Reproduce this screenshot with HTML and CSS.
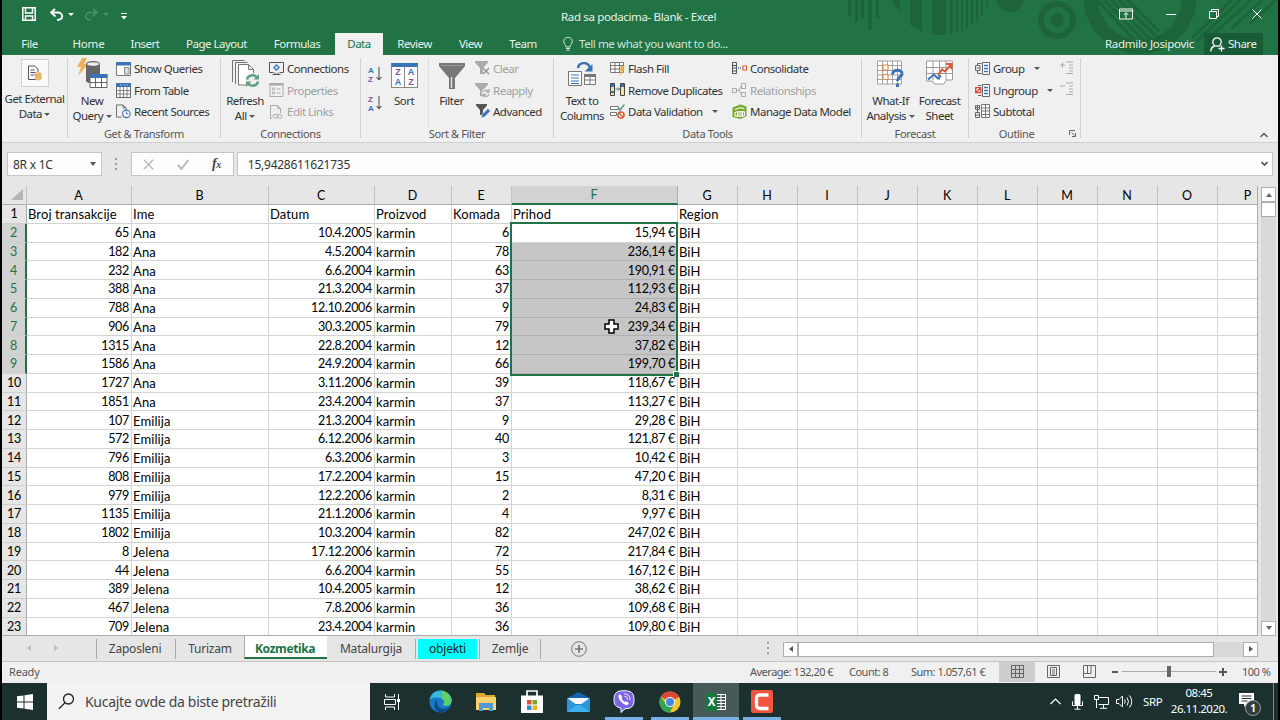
FILE: index.html
```html
<!DOCTYPE html>
<html lang="sr-Latn">
<head>
  <meta charset="UTF-8">
  <meta name="viewport" content="width=device-width, initial-scale=1.0">
  <title>Rad sa podacima- Blank - Excel</title>
  <link rel="stylesheet" href="styles.css">
</head>
<body>
  <svg class="defs" width="0" height="0">
    <defs>
      <symbol id="i-window" viewBox="0 0 15 14"><path d="M.5.5h14v13H.5z" fill="#fff" stroke="#777"/><path d="M0 0h15v3.5H0z" fill="#3b74b5"/><path d="M8.500 5.500h4.500v6.500h-4.500z" fill="#ddd" stroke="#888"/></symbol>
      <symbol id="i-table" viewBox="0 0 15 15"><path d="M.5.5h14v14H.5z" fill="#fff" stroke="#666"/><path d="M0 0h15v4H0z" fill="#3b74b5"/><path d="M4 4v11M7.500 4v11M11 4v11M0 7.500h15M0 11h15" stroke="#777" stroke-width=".9"/><path d="M4.500 2h1M7.500 2h1M10.500 2h1" stroke="#fff"/></symbol>
      <symbol id="i-recent" viewBox="0 0 16 15"><path d="M6 13.500H.5V.5h7l3 3V6M7.500.5v3h3" fill="none" stroke="#666"/><circle cx="11" cy="10" r="4" fill="#fff" stroke="#3b74b5" stroke-width="1.200"/><path d="M11 7.500V10h2.200" fill="none" stroke="#3b74b5"/></symbol>
      <symbol id="i-conn" viewBox="0 0 15 13"><path d="M4.500 10.500h-4V.5h14v10h-4M3.500 12.500h8M6 10.500v2M9 10.500v2" fill="none" stroke="#555"/><path d="M7.500 2L11 5.500 7.500 9 4 5.500z" fill="#3b74b5"/><circle cx="7.500" cy="5.500" r="1.200" fill="#fff"/></symbol>
      <symbol id="i-props" viewBox="0 0 14 14"><path d="M.5.5h13v13H.5z" fill="none" stroke="#aaa"/><path d="M0 0h14v2.500H0z" fill="#aaa"/><path d="M3 5h2v2H3zM3 9h2v2H3z" fill="none" stroke="#aaa" stroke-width=".8"/><path d="M7 6h4M7 10h4" stroke="#aaa"/></symbol>
      <symbol id="i-links" viewBox="0 0 13 14"><path d="M2 13.500H.5V.5h7l3 3V8M7.500.5v3h3" fill="none" stroke="#aaa"/><rect x="3" y="9.500" width="5" height="3.500" rx="1.700" fill="none" stroke="#aaa"/><rect x="7" y="9.500" width="5" height="3.500" rx="1.700" fill="none" stroke="#aaa"/></symbol>
      <symbol id="i-flash" viewBox="0 0 15 14"><path d="M.5.5h13v10H.5zM5 .5v10M9.500.5v10M.5 3.500h13M.5 7h13" fill="#fff" stroke="#777"/><path d="M11 4h4l-2 3.500h2L9.500 14l1.500-5H9z" fill="#e8b35a"/></symbol>
      <symbol id="i-dup" viewBox="0 0 15 14"><path d="M.5.5h4v12h-4zM10.500.5h4v12h-4z" fill="#f3e1a0" stroke="#444"/><path d="M1 1h3v3H1zM1 8h3v2H1zM11 1h3v3h-3z" fill="#3b74b5"/><path d="M5.500 6h4M8 4.500L9.500 6 8 7.500" fill="none" stroke="#3b74b5"/></symbol>
      <symbol id="i-valid" viewBox="0 0 15 15"><path d="M.5 2.500h8v3h-8zM.5 8.500h6v3h-6z" fill="#fff" stroke="#777"/><path d="M8 3.500l2 2.500L14.500.5" fill="none" stroke="#4f9c7e" stroke-width="1.500"/><circle cx="11" cy="11" r="3" fill="#fff" stroke="#dc5936" stroke-width="1.500"/><path d="M9 9l4 4" stroke="#dc5936" stroke-width="1.300"/></symbol>
      <symbol id="i-cons" viewBox="0 0 15 13"><path d="M.5.5h4v11h-4zM.5 3.500h4M.5 6h4M.5 9h4" fill="none" stroke="#555"/><path d="M6 6h3" stroke="#3b74b5" stroke-width="1.500" stroke-dasharray="1 1"/><path d="M11 4h3.500v4H11z" fill="#fff" stroke="#dc5936" stroke-width="1.200"/></symbol>
      <symbol id="i-rel" viewBox="0 0 15 15"><path d="M.5 5.500h4v4h-4zM9.500.5h4v5h-4zM9.500 9.500h4v4h-4zM4.500 7.500h2.500M7 7.500L9.500 3M7 7.500l2.500 4" fill="none" stroke="#aaa"/></symbol>
      <symbol id="i-model" viewBox="0 0 14 15"><path d="M0 3.500L8 .5l6 2v9.500l-6 3-8-2z" fill="#76a82d"/><path d="M2.500 5.500L8 3.500l4 1.500M2.500 8.500l2.500-.7v4.500l-2.500-.6zM6.500 7.500h2v5h-2zM10 7.500l2 .5v3.500l-2 .8z" fill="none" stroke="#fff" stroke-width="1.100"/></symbol>
      <symbol id="i-group" viewBox="0 0 15 13"><path d="M2.500 3V1.500h4M2.500 9v2.500h4M.5 3.500h4.500v5H.5zM1.500 6h3" fill="none" stroke="#666"/><path d="M7.500.5h7v12h-7z" fill="#fff" stroke="#666"/><path d="M9 3.500h4M9 6.500h4M9 9.500h4" stroke="#3b74b5" stroke-width="1.300"/></symbol>
      <symbol id="i-ungroup" viewBox="0 0 15 13"><path d="M3 1.500h3.500M3 11.500h3.500" stroke="#666"/><path d="M7.500.5h7v12h-7z" fill="#fff" stroke="#666"/><path d="M9 3.500h4M9 6.500h4M9 9.500h4" stroke="#3b74b5" stroke-width="1.300"/><path d="M.7 3.700h5v5h-5zM1 8.500l4.500-4.500" fill="none" stroke="#dc4a30" stroke-width="1.300"/></symbol>
      <symbol id="i-subtotal" viewBox="0 0 15 15"><path d="M.5 1.500h4v4h-4zM.5 8.500h4v5h-4zM2.500 2v3M1 3.500h3M2.500 5.500v3M1 11h3" fill="none" stroke="#666"/><path d="M6.500.5h8v13h-8zM10.500.5v13M6.500 4h8M6.500 7h8M6.500 10.500h8" fill="#fff" stroke="#777"/></symbol>
      <symbol id="i-down" viewBox="0 0 6 16"><path d="M3 1v12.500M.5 11L3 13.700 5.500 11" fill="none" stroke="#555" stroke-width="1.100"/></symbol>
    </defs>
  </svg>

  <header class="titlebar">
    <svg class="pattern" width="440" height="55" viewBox="0 0 440 55">
      <g fill="#1e6439">
        <path d="M8 0h3v16H8zM15 0h3v22h-3zM21 0h3v19h-3zM28 0h4v30h-4zM36 0h3v18h-3z"/>
        <path d="M53 0h7v12l-7-9zM70 0h12v32l-12-7zM92 0h14v35H94l-2-2zM110 0h3v34h-3zM116 0h2v33h-2zM121 0h2v32h-2zM126 0h2v29h-2zM131 0h2v25h-2zM136 0h2v22h-2zM141 0h2v16h-2zM146 0h2v8h-2z"/>
        <path d="M157 0h26a13 12 0 0 1-26 0z"/>
        <circle cx="217" cy="20" r="7"/>
      </g>
      <circle cx="217" cy="20" r="16" fill="none" stroke="#1e6439" stroke-width="6"/>
      <circle cx="300" cy="-2" r="49" fill="none" stroke="#1e6439" stroke-width="14"/>
      <path d="M257 0l43 46M264 0l42 43M271 0l40 40M279 0l37 36M287 0l32 31" stroke="#1e6439" stroke-width="3" fill="none"/>
      <path d="M392 0l-40 38M400 0l-43 41M411 0l-44 40M422 0l-30 28M436 0l-26 24" stroke="#1e6439" stroke-width="3" fill="none"/>
    </svg>
    <div class="quick">
      <svg width="14" height="14" viewBox="0 0 14 14"><path d="M.8.8h12.400v12.400H.8zM3.500 1v5h7V1M3.500 13V9h7v4" fill="none" stroke="#fff" stroke-width="1.500"/></svg>
      <svg class="undo" width="14" height="13" viewBox="0 0 14 13"><path d="M5 .8L1 4.500l4.500 4M1.500 4.500H8c5 0 6.500 7-1 7.500" fill="none" stroke="#fff" stroke-width="1.800"/></svg>
      <i class="caret light"></i>
      <svg class="redo" width="14" height="13" viewBox="0 0 14 13"><path d="M9 .8l4 3.700-4.500 4M12.500 4.500H6c-5 0-6.500 7 1 7.500" fill="none" stroke="#4d9168" stroke-width="1.600"/></svg>
      <i class="caret faint"></i>
      <svg class="more" width="6" height="7" viewBox="0 0 6 7"><path d="M0 .5h6" stroke="#fff"/><path d="M0 3h6L3 6.500z" fill="#fff"/></svg>
    </div>
    <div class="doc-title">Rad sa podacima- Blank - Excel</div>
    <div class="window-buttons">
      <svg width="14" height="12" viewBox="0 0 14 12"><path d="M.5 1h13v10H.5zM.5 3h13M7 10V5M4.700 7L7 4.700 9.300 7" fill="none" stroke="#fff"/></svg>
      <svg width="10" height="12" viewBox="0 0 10 12"><path d="M0 6.500h10" stroke="#fff"/></svg>
      <svg width="10" height="12" viewBox="0 0 10 12"><path d="M.5 3.500h7v7h-7zM2.500 3.500v-2h7v7h-2" fill="none" stroke="#fff"/></svg>
      <svg width="10" height="12" viewBox="0 0 10 12"><path d="M.5 1.500l9 9M9.500 1.500l-9 9" stroke="#fff"/></svg>
    </div>
  </header>

  <nav class="tabs">
    <a class="tab file">File</a>
    <a class="tab home">Home</a>
    <a class="tab insert">Insert</a>
    <a class="tab layout">Page Layout</a>
    <a class="tab formulas">Formulas</a>
    <a class="tab data active">Data</a>
    <a class="tab review">Review</a>
    <a class="tab view">View</a>
    <a class="tab team">Team</a>
    <div class="tell-me">
      <svg width="10" height="14" viewBox="0 0 10 14"><path d="M3 10C3 8 .8 7 .8 4.500a4.200 4.200 0 0 1 8.400 0C9.200 7 7 8 7 10zM3 11.500h4M3.500 13.300h3" fill="none" stroke="#d5e8dc"/></svg>
      <span>Tell me what you want to do...</span>
    </div>
    <div class="account">Radmilo Josipovic</div>
    <div class="share">
      <svg width="15" height="15" viewBox="0 0 15 15"><circle cx="7" cy="5" r="4.200" fill="none" stroke="#fff" stroke-width="1.300"/><path d="M.8 14.500c0-3.500 2-5 4-5.500M9 8.700l1 .6M8.500 11.500h6M11.500 8.500v6" fill="none" stroke="#fff" stroke-width="1.300"/></svg>
      <span>Share</span>
    </div>
  </nav>

  <section class="ribbon">
    <div class="group g-external">
      <div class="big">
        <span class="framed"><svg width="16" height="16" viewBox="0 0 16 16"><path d="M9 14.500H1.500V1h6l3.500 3v3M3.500 5h4M3.500 7.500h5M3.500 10h4" fill="none" stroke="#555"/><path d="M8 8.500c0-1.800 6.500-1.800 6.500 0V14c0 1.800-6.500 1.800-6.500 0z" fill="#e4b96b"/></svg></span>
        <span>Get External</span><span>Data <i class="caret"></i></span>
      </div>
    </div>
    <div class="group g-transform">
      <div class="row">
        <div class="big">
          <svg width="31" height="31" viewBox="0 0 31 31"><path d="M5 0h5L7 6h4L1 18l3-9H0z" fill="#e8b35a"/><path d="M9 6c0-4 14-4 14 0v17c0 3-14 3-14 0z" fill="#666"/><ellipse cx="16" cy="6" rx="6" ry="1.800" fill="#f0f0f0"/><path d="M13 16.500h17v13H13z" fill="#fff" stroke="#666"/><path d="M12.500 16h18v4h-18z" fill="#3b74b5"/><path d="M18.500 20v9M24.500 20v9M13 24.500h17" stroke="#666"/></svg>
          <span>New</span><span>Query <i class="caret"></i></span>
        </div>
        <div class="stack">
          <div class="small"><svg width="15" height="14"><use href="#i-window"/></svg>Show Queries</div>
          <div class="small"><svg width="15" height="15"><use href="#i-table"/></svg>From Table</div>
          <div class="small"><svg width="15" height="15"><use href="#i-recent"/></svg>Recent Sources</div>
        </div>
      </div>
      <div class="caption">Get &amp; Transform</div>
    </div>
    <div class="group g-connections">
      <div class="row">
        <div class="big">
          <svg width="29" height="29" viewBox="0 0 29 29"><path d="M1.500 23V1.500h12M4.500 25V3.500h12" fill="none" stroke="#777"/><path d="M7.500 5.500h10l5 5V26h-15zM17.500 5.500v5h5" fill="#fff" stroke="#777"/><circle cx="21.500" cy="21.500" r="7.500" fill="#f0f0f0"/><path d="M16 20.500a5.500 5 0 0 1 10-2M27 22.500a5.500 5 0 0 1-10 2" fill="none" stroke="#5fa185" stroke-width="2.500"/><path d="M28 15v5.500h-5.500zM15 28v-5.500h5.500z" fill="#5fa185"/></svg>
          <span>Refresh</span><span>All <i class="caret"></i></span>
        </div>
        <div class="stack">
          <div class="small"><svg width="15" height="13"><use href="#i-conn"/></svg>Connections</div>
          <div class="small off"><svg width="15" height="14"><use href="#i-props"/></svg>Properties</div>
          <div class="small off"><svg width="15" height="14"><use href="#i-links"/></svg>Edit Links</div>
        </div>
      </div>
      <div class="caption">Connections</div>
    </div>
    <div class="group g-sort">
      <div class="row">
        <div class="sort-pair">
          <div class="az"><span><b class="blue">A</b><b class="violet">Z</b></span><svg width="6" height="16"><use href="#i-down"/></svg></div>
          <div class="az"><span><b class="violet">Z</b><b class="blue">A</b></span><svg width="6" height="16"><use href="#i-down"/></svg></div>
        </div>
        <div class="big sort">
          <div class="sort-icon"><div><b class="violet">Z</b><b class="blue">A</b></div><div><b class="blue">A</b><b class="violet">Z</b></div></div>
          <span>Sort</span>
        </div>
        <div class="big filter"><svg width="26" height="26" viewBox="0 0 26 26"><path d="M0 0h26v3L16 15v11h-6V15L0 3z" fill="#777"/><path d="M2 2.500h22" stroke="#999"/><path d="M12.500 14v11" stroke="#ddd" stroke-width="1.500"/></svg><span>Filter</span></div>
        <div class="stack">
          <div class="small off"><svg width="16" height="15" viewBox="0 0 16 15"><path d="M0 0h13v1.500L8 7v6H5V7L0 1.500z" fill="#aaa"/><path d="M8 7l6 6M14 7l-6 6" stroke="#999" stroke-width="1.500"/></svg>Clear</div>
          <div class="small off"><svg width="16" height="15" viewBox="0 0 16 15"><path d="M0 0h13v1.500L8 7v6H5V7L0 1.500z" fill="#aaa"/><circle cx="11" cy="10" r="4.500" fill="#f0f0f0"/><path d="M8 9.500a3 3 0 0 1 5.500-1M14 11a3 3 0 0 1-5.500 1M14 6v3h-3M8 14.500V11.500h3" fill="none" stroke="#aaa" stroke-width="1.300"/></svg>Reapply</div>
          <div class="small"><svg width="16" height="15" viewBox="0 0 16 15"><path d="M1 0h11v1.500L8 6v5H5V6L1 1.500z" fill="#555"/><path d="M6 14l1-3.500 6-6 2.500 2.500-6 6z" fill="#3b74b5" stroke="#f0f0f0" stroke-width=".6"/></svg>Advanced</div>
        </div>
      </div>
      <div class="caption">Sort &amp; Filter</div>
    </div>
    <div class="group g-tools">
      <div class="row">
        <div class="big">
          <svg width="29" height="26" viewBox="0 0 29 26"><path d="M10 6c1-6 10-7 12 0" fill="none" stroke="#3b74b5" stroke-width="2.500"/><path d="M24.500 2v7.500h-8z" fill="#3b74b5"/><path d="M.5 9.500h13v14H.5z" fill="#fff" stroke="#777"/><path d="M3 13h8M3 16h8M3 19h8M3 21.500h8" stroke="#3b74b5" stroke-width="1.200"/><path d="M16.500 12.500h11v10h-11zM22 14v8M17 18h10" fill="#fff" stroke="#777"/><path d="M16 12h12v3H16z" fill="#777"/></svg>
          <span>Text to</span><span>Columns</span>
        </div>
        <div class="stack first">
          <div class="small"><svg width="15" height="14"><use href="#i-flash"/></svg>Flash Fill</div>
          <div class="small"><svg width="15" height="14"><use href="#i-dup"/></svg>Remove Duplicates</div>
          <div class="small"><svg width="15" height="15"><use href="#i-valid"/></svg>Data Validation <i class="caret far"></i></div>
        </div>
        <div class="stack second">
          <div class="small"><svg width="15" height="13"><use href="#i-cons"/></svg>Consolidate</div>
          <div class="small off"><svg width="15" height="15"><use href="#i-rel"/></svg>Relationships</div>
          <div class="small"><svg width="15" height="15"><use href="#i-model"/></svg>Manage Data Model</div>
        </div>
      </div>
      <div class="caption">Data Tools</div>
    </div>
    <div class="group g-forecast">
      <div class="row">
        <div class="big">
          <svg width="28" height="28" viewBox="0 0 28 28"><path d="M.5 1.500h24v23H.5zM5.500 1.500v23M10.500 1.500v23M15.500 1.500v23M20.500 1.500v23M.5 6h24M.5 11h24M.5 15.500h24M.5 20h24" fill="#fff" stroke="#999" stroke-width=".9"/><path d="M6 5.500h5v5H6zM6 15h5v5H6z" fill="#fff" stroke="#e08a4c" stroke-width="1.200"/><path d="M15.500 15c0-6 10-5.500 9.500-.5-.5 3-4.500 3-4.500 7M20.500 24v3.500" fill="none" stroke="#3b74b5" stroke-width="3"/></svg>
          <span>What-If</span><span>Analysis <i class="caret"></i></span>
        </div>
        <div class="big sheet">
          <svg width="28" height="28" viewBox="0 0 28 28"><path d="M.5 1.500h26v19h-6l-3 4h-9l-2-3h-6zM7 1.500v19M13.500 1.500v19M20 1.500v19M.5 8h26M.5 14h26" fill="#fff" stroke="#999"/><path d="M2 20l6-5 4 4 3-3" fill="none" stroke="#3b74b5" stroke-width="2"/><path d="M12 16l4-6 3 2 6-7M20 4.500h5.500V10" fill="none" stroke="#dc5936" stroke-width="2"/></svg>
          <span>Forecast</span><span>Sheet</span>
        </div>
      </div>
      <div class="caption">Forecast</div>
    </div>
    <div class="group g-outline">
      <div class="row">
        <div class="stack">
          <div class="small"><svg width="15" height="13"><use href="#i-group"/></svg>Group <i class="caret far"></i></div>
          <div class="small"><svg width="15" height="13"><use href="#i-ungroup"/></svg>Ungroup <i class="caret far"></i></div>
          <div class="small"><svg width="15" height="15"><use href="#i-subtotal"/></svg>Subtotal</div>
        </div>
        <div class="details">
          <svg width="13" height="14" viewBox="0 0 13 14"><path d="M0 4h5M2.500 1.500v5M6 1h7M9 4h4M9 7h4M9 10h4M6 12.500h7" stroke="#aaa"/></svg>
          <svg width="13" height="14" viewBox="0 0 13 14"><path d="M0 4h5M6 1h7M9 4h4M9 7h4M9 10h4M6 12.500h7" stroke="#aaa"/></svg>
        </div>
      </div>
      <div class="caption">Outline</div>
      <svg class="launcher" width="7" height="7" viewBox="0 0 7 7"><path d="M.5 5V.5H6M2.500 2.500l3 3M6.500 3v3.500H3" fill="none" stroke="#666"/></svg>
    </div>
    <svg class="collapse" width="8" height="6" viewBox="0 0 8 6"><path d="M.5 5L4 1.500 7.500 5" fill="none" stroke="#555" stroke-width="1.500"/></svg>
  </section>

  <section class="formula-bar">
    <div class="name-box"><span>8R x 1C</span><i class="caret wide"></i></div>
    <div class="grip"><i></i><i></i><i></i></div>
    <div class="fx-buttons">
      <svg width="11" height="11" viewBox="0 0 11 11"><path d="M.8.8l9.400 9.400M10.200.8L.8 10.200" stroke="#bbb" stroke-width="1.500"/></svg>
      <svg width="12" height="11" viewBox="0 0 12 11"><path d="M.8 6l3.500 4L11.300 1" fill="none" stroke="#bbb" stroke-width="2"/></svg>
      <span class="fx">f<small>x</small></span>
    </div>
    <div class="formula"><span>15,9428611621735</span><svg width="7" height="6" viewBox="0 0 7 6"><path d="M.5 1l3 3 3-3" fill="none" stroke="#555" stroke-width="1.700"/></svg></div>
  </section>

  <main class="workbook">
    <div class="sheet-area">
      <table id="sheet">
        <colgroup>
          <col class="c-num"><col class="c-a"><col class="c-b"><col class="c-c"><col class="c-d"><col class="c-e"><col class="c-f">
          <col class="c-std"><col class="c-std"><col class="c-std"><col class="c-std"><col class="c-std"><col class="c-std"><col class="c-std"><col class="c-std"><col class="c-std"><col class="c-p">
        </colgroup>
        <thead></thead>
        <tbody></tbody>
      </table>
      <div class="selection"><i></i></div>
      <svg class="cursor" width="15" height="15" viewBox="0 0 15 15"><path d="M5 1h5v4h4v5h-4v4H5v-4H1V5h4z" fill="#fff" stroke="#000" stroke-width="1.500"/></svg>
    </div>
    <div class="vscroll">
      <div class="arrow"><i class="up"></i></div>
      <div class="thumb"></div>
      <div class="track"></div>
      <div class="arrow"><i class="down"></i></div>
    </div>
  </main>

  <section class="sheet-tabs">
    <div class="pager"><i class="left"></i><i class="right"></i></div>
    <div class="st zaposleni">Zaposleni</div>
    <div class="st turizam">Turizam</div>
    <div class="st kozmetika">Kozmetika</div>
    <div class="st matalurgija">Matalurgija</div>
    <div class="st objekti">objekti</div>
    <div class="st zemlje">Zemlje</div>
    <svg class="add" width="16" height="16" viewBox="0 0 16 16"><circle cx="8" cy="8" r="7.300" fill="none" stroke="#777"/><path d="M8 4v8M4 8h8" stroke="#777" stroke-width="1.700"/></svg>
    <div class="grip"><i></i><i></i><i></i></div>
    <div class="hscroll">
      <div class="arrow"><i class="left"></i></div>
      <div class="thumb"></div>
      <div class="track"></div>
      <div class="arrow"><i class="right"></i></div>
    </div>
  </section>

  <footer class="status">
    <span class="ready">Ready</span>
    <span class="avg">Average: 132,20 €</span>
    <span class="count">Count: 8</span>
    <span class="sum">Sum: 1.057,61 €</span>
    <div class="mode on"><svg width="13" height="13" viewBox="0 0 13 13"><path d="M.5.5h12v12H.5zM4.500.5v12M8.500.5v12M.5 4.500h12M.5 8.500h12" fill="none" stroke="#666"/></svg></div>
    <div class="mode"><svg width="13" height="13" viewBox="0 0 13 13"><path d="M.5.500h12v12H.5zM3.500 2.500h6v8h-6zM5 5h3M5 7h3M5 9h3" fill="none" stroke="#666"/></svg></div>
    <div class="mode"><svg width="13" height="13" viewBox="0 0 13 13"><path d="M.5.500h12v12H.5zM.5 8.500h7.500v-8M4.500.5v8" fill="none" stroke="#666"/></svg></div>
    <div class="zoom"><i class="minus"></i><div class="slider"><i></i></div><i class="plus"></i><span>100 %</span></div>
  </footer>

  <footer class="taskbar">
    <div class="start"><svg width="16" height="16" viewBox="0 0 16 16"><path d="M0 2.300l6.500-.9v6.100H0zM7.500 1.200L16 0v7.500H7.500zM0 8.500h6.500v6.100L0 13.700zM7.500 8.500H16V16l-8.500-1.200z" fill="#fff"/></svg></div>
    <div class="search">
      <svg width="17" height="17" viewBox="0 0 17 17"><circle cx="10.500" cy="6" r="5" fill="none" stroke="#222" stroke-width="1.300"/><path d="M7 9.700L1 15.800" stroke="#222" stroke-width="1.300"/></svg>
      <span>Kucajte ovde da biste pretražili</span>
    </div>
    <div class="app task-view"><svg width="17" height="16" viewBox="0 0 17 16"><path d="M1.500 0v3h9V0M1.500 16v-3h9v3M.5 5.500h11v5H.5zM14.500 0v5M14.500 8v8" fill="none" stroke="#fff"/><path d="M13 5h3v3h-3z" fill="#fff"/></svg></div>
    <div class="app"><svg width="23" height="23" viewBox="0 0 23 23"><circle cx="11.500" cy="11.500" r="11" fill="#1879c9"/><path d="M.6 10C2 2 9-.5 14 .8c7 2 10 8.500 8 12.200-1.500 3-6 3.500-8 2 2-2 1.500-6-3-7C7 7 3 7 .6 10z" fill="#35b6dc"/><path d="M13 .7c8 1.500 11 8 9 12.300-1.500 3-6 3.500-8 2 2-2 1.500-5-1-6.500z" fill="#5fcf6a"/><path d="M9 9.500c-3 4 1 10 6 9.500 3-.2 4-1.500 5.500-2C17 23 10 23.500 7 20c-3-4-1.500-9 2-10.500z" fill="#114a8b"/></svg></div>
    <div class="app"><svg width="20" height="18" viewBox="0 0 20 18"><path d="M0 0h8l2 2h9v14H0z" fill="#e0a52e"/><path d="M0 4h20v13H0z" fill="#f8d36d"/><path d="M3 10h14v8h-4v-3H7v3H3z" fill="#4f9bd0"/></svg></div>
    <div class="app"><svg width="22" height="23" viewBox="0 0 22 23"><path d="M6 6V1h10v5" fill="none" stroke="#fff" stroke-width="1.700"/><path d="M0 5.500h22V23H0z" fill="#fff"/><path d="M6 10h4.500v4.500H6z" fill="#e3532b"/><path d="M11.500 10H16v4.500h-4.500z" fill="#74ac32"/><path d="M6 15.500h4.500V20H6z" fill="#2494d5"/><path d="M11.500 15.500H16V20h-4.500z" fill="#edb31d"/></svg></div>
    <div class="app"><svg width="23" height="20" viewBox="0 0 23 20"><path d="M0 6L11.500 0 23 6v14H0z" fill="#1565ac"/><path d="M1.500 6h20v6h-20z" fill="#f5f9fb"/><path d="M0 6l11.500 8L0 20z" fill="#2b95dc"/><path d="M23 6l-11.500 8L23 20z" fill="#2b95dc"/><path d="M0 20l11.500-8L23 20z" fill="#3db2ef"/></svg></div>
    <div class="app open"><svg width="22" height="23" viewBox="0 0 22 23"><path d="M11 .7c7 0 10 2 10 9s-3 9-9 9L8 22.500V18C3 17 1 15 1 9.700c0-7 3-9 10-9z" fill="#7d65e8" stroke="#fff"/><path d="M6.500 4.500c-2 1-1 4 1.500 7s6 4.500 7.500 2.500c1-1.500-2-3-3-2.500-1 .8-1.500 0-2.500-1s-1.800-1.700-1-2.500C9.700 7 8 4 6.500 4.500z" fill="#fff"/><path d="M11 4c4 0 6 2 6 6M11.500 6.500c2 0 3 1 3 3" fill="none" stroke="#fff"/></svg></div>
    <div class="app open"><svg width="22" height="22" viewBox="0 0 22 22"><circle cx="11" cy="11" r="10.500" fill="#f5c52a"/><path d="M11 11L1.900 5.700A10.500 10.500 0 0 1 20.100 5.700z" fill="#dc4736"/><path d="M1.900 5.700A10.500 10.500 0 0 0 11 21.500L15 13l-8 0z" fill="#35a455"/><path d="M11 5.700h9.100" stroke="#dc4736"/><circle cx="11" cy="11" r="5" fill="#fff"/><circle cx="11" cy="11" r="4" fill="#4286e6"/></svg></div>
    <div class="app open current"><div class="xl"><b>X</b><svg width="9" height="16" viewBox="0 0 9 16"><path d="M0 .5h8.500v15H0M0 3.500h8M0 6.500h8M0 9.500h8M0 12.500h8M4 0v16" fill="none" stroke="#fff"/></svg></div></div>
    <div class="app open"><svg width="22" height="23" viewBox="0 0 22 23"><rect width="22" height="23" rx="2" fill="#f0563f"/><path d="M17.500 5H9Q5.500 5 5.500 8v7q0 3.500 3.500 3.500h8.500" fill="none" stroke="#fff" stroke-width="3.300"/></svg></div>
    <div class="tray">
      <svg class="chev" width="11" height="7" viewBox="0 0 11 7"><path d="M.5 6l5-5 5 5" fill="none" stroke="#fff" stroke-width="1.200"/></svg>
      <svg class="mic" width="11" height="16" viewBox="0 0 11 16"><rect x="2.500" width="6" height="11" rx="1.500" fill="#fff"/><path d="M.5 7.500v4h10v-4M5.500 12v3M2.500 15.200h6" fill="none" stroke="#fff"/></svg>
      <svg class="net" width="15" height="14" viewBox="0 0 15 14"><path d="M5 2.500h9.500v7H4.500M9.500 10v3M6 13.300h7M.5.500h4v4h-4zM2.500 4.500v8.500" fill="none" stroke="#fff"/></svg>
      <svg class="vol" width="17" height="13" viewBox="0 0 17 13"><path d="M.5 4.500H3L6.500 1v11L3 8.500H.5zM8.500 4.500q1.500 2 0 4M11 2.500q3 4 0 8M13.500.5q4.500 6 0 12" fill="none" stroke="#fff"/></svg>
      <span class="lang">SRP</span>
      <div class="clock"><span>08:45</span><span>26.11.2020.</span></div>
      <div class="notes"><svg width="15" height="14" viewBox="0 0 15 14"><path d="M0 0h15v11H8l-3 3v-3H0z" fill="#fff"/><path d="M2.500 3h10M2.500 5.500h10M2.500 8h6" stroke="#1c312f"/></svg><b>1</b></div>
      <i class="desk"></i>
    </div>
  </footer>

  <script src="script.js"></script>
</body>
</html>
```
FILE: styles.css
```css
* {
  box-sizing: border-box;
}
html {
  background: #000;
}
body {
  width: 1276px;
  height: 720px;
  margin: 0 2px;
  overflow: hidden;
  background: #e6e6e6;
  font-family: "Noto Sans", "Open Sans", sans-serif;
  font-size: 11.5px;
  letter-spacing: -0.35px;
  color: #333;
  white-space: nowrap;
}
svg {
  display: block;
  flex: none;
}
.defs {
  position: absolute;
}

/* title bar, its background runs on behind the tabs */
.titlebar {
  position: relative;
  display: flex;
  align-items: center;
  height: 55px;
  padding-bottom: 23px;
  margin-bottom: -23px;
  background: #217346;
  color: #e6f1ea;
}
.pattern {
  position: absolute;
  top: 0;
  right: -2px;
}
.quick {
  display: flex;
  align-items: center;
  width: 559px;
  padding: 0 0 4px 20px;
}
.undo { margin-left: 14px; }
.redo { margin-left: 10px; }
.more { margin: 4px 0 0 12px; }
.caret {
  display: inline-block;
  flex: none;
  border: 3px solid transparent;
  border-top: 3px solid #555;
  border-bottom: 0;
  vertical-align: 2px;
}
.caret.light { border-top-color: #fff; margin-left: 4px; }
.caret.faint { border-top-color: #4d9168; margin-left: 5px; }
.caret.wide { border-width: 4px 3.5px 0; }
.caret.far { margin-left: 6px; }
.doc-title {
  width: 557px;
  margin-top: 1px;
}
.window-buttons {
  position: relative;
  display: flex;
  align-items: center;
  gap: 33px;
  padding: 0 0 4px 1px;
}

/* ribbon tabs */
.tabs {
  position: relative;
  display: flex;
  height: 23px;
  color: #e6f1ea;
  line-height: 24px;
  letter-spacing: -0.5px;
}
.tab {
  text-align: center;
  height: 23px;
}
.tab.file { width: 57px; padding-right: 2px; }
.tab.home { width: 59px; letter-spacing: -0.2px; }
.tab.insert { width: 54px; }
.tab.layout { width: 89px; }
.tab.formulas { width: 72px; margin-right: 2px; }
.tab.data { width: 48px; height: 22px; margin-top: 1px; line-height: 22px; }
.tab.review { width: 63px; }
.tab.view { width: 49px; }
.tab.team { width: 56px; }
.tab.active {
  background: #f0f0f0;
  color: #217346;
}
.tell-me {
  display: flex;
  align-items: center;
  gap: 6px;
  width: 554px;
  padding-left: 12px;
  color: #d0e4d8;
  letter-spacing: -0.4px;
}
.account {
  width: 99px;
  letter-spacing: -0.3px;
}
.share {
  display: flex;
  align-items: center;
  gap: 3px;
  width: 59px;
  height: 22px;
  margin-top: 1px;
  padding-left: 6px;
  background: #185c37;
}

/* ribbon */
.ribbon {
  position: relative;
  display: flex;
  height: 88px;
  background: #f0f0f0;
  border-bottom: 1px solid #cfcfcf;
  letter-spacing: -0.5px;
}
.group {
  position: relative;
  height: 80px;
  margin-top: 3px;
  border-right: 1px solid #d2d2d2;
}
.row {
  display: flex;
  height: 69px;
}
.g-external { width: 66px; }
.g-transform { width: 153px; }
.g-connections { width: 140px; }
.g-sort { width: 193px; }
.g-tools { width: 308px; }
.g-forecast { width: 107px; }
.g-outline { width: 112px; }
.caption {
  position: relative;
  height: 12px;
  font-size: 11px;
  line-height: 12px;
  letter-spacing: -0.35px;
  text-align: center;
  color: #555;
  padding-top: 1px;
}
.big {
  display: flex;
  flex-direction: column;
  align-items: center;
  line-height: 15px;
}
.big > svg, .sort-icon {
  height: 31px;
  margin-bottom: 4px;
}
.g-external .big { width: 65px; letter-spacing: -0.55px; }
.g-transform .big { width: 48px; }
.g-connections .big { width: 48px; }
.framed {
  display: flex;
  align-items: center;
  justify-content: center;
  width: 28px;
  height: 28px;
  margin: 1px 0 4px;
  background: #fafafa;
  border: 1px solid #d0d0d0;
}
.stack {
  display: flex;
  flex-direction: column;
}
.small {
  display: flex;
  align-items: center;
  gap: 3px;
  height: 21.6px;
}
.off {
  color: #a0a0a0;
}
.blue { color: #3b74b5; }
.violet { color: #86529f; }
.sort-pair {
  width: 28px;
  padding: 8px 0 0 7px;
}
.az {
  display: flex;
  gap: 1px;
  height: 29px;
}
.az b {
  display: block;
  width: 7px;
  font: bold 8px/9px "Liberation Sans", sans-serif;
}
.big.sort { width: 30px; }
.sort-icon {
  display: flex;
  width: 27px;
  height: 25px;
  margin: 5px 0 5px;
  border: 1px solid #888;
  border-top: 4px solid #3b74b5;
  background: #fff;
}
.sort-icon div {
  width: 50%;
  text-align: center;
}
.sort-icon div + div {
  border-left: 1px solid #888;
}
.sort-icon b {
  display: block;
  font: bold 9px/10px "Liberation Sans", sans-serif;
}
.filter {
  width: 46px;
  margin-left: 9px;
  border-left: 1px solid #ddd;
}
.filter > svg {
  height: 26px;
  margin: 5px 0 4px;
}
.g-sort .stack { margin-left: 1px; }
.g-sort .small { gap: 2px; }
.g-tools .big { width: 56px; }
.g-tools .big > svg { height: 26px; margin: 4px 0 5px; }
.g-tools .first { width: 122px; }
.g-forecast .big { width: 57px; }
.g-forecast .sheet { width: 41px; }
.g-outline .stack { width: 91px; padding-left: 6px; }
.details {
  display: flex;
  flex-direction: column;
  gap: 7px;
  padding-top: 3px;
}
.g-outline .caption { padding-right: 16px; }
.launcher {
  position: absolute;
  right: 4px;
  bottom: 1px;
}
.collapse {
  position: absolute;
  right: 10px;
  bottom: 4px;
}

/* formula bar */
.formula-bar {
  display: flex;
  height: 43px;
  padding: 9px 5px 10px;
  font-size: 12px;
  letter-spacing: -0.25px;
}
.name-box, .fx-buttons, .formula {
  display: flex;
  align-items: center;
  height: 24px;
  background: #fdfdfd;
  border: 1px solid #c6c6c6;
}
.name-box {
  width: 95px;
  justify-content: space-between;
  padding: 0 5px;
}
.grip {
  display: flex;
  flex-direction: column;
  align-items: center;
  justify-content: center;
  gap: 3px;
  width: 29px;
}
.grip i {
  width: 2px;
  height: 2px;
  background: #999;
}
.fx-buttons {
  width: 103px;
  padding-left: 11px;
  gap: 23px;
}
.fx {
  font: italic bold 14px "Liberation Serif", serif;
  color: #444;
}
.fx small {
  font-size: 10px;
}
.formula {
  width: 1037px;
  margin-left: 3px;
  padding: 0 4px 0 10px;
  justify-content: space-between;
}

/* grid */
.workbook {
  display: flex;
  height: 449.5px;
}
.sheet-area {
  position: relative;
  width: 1256px;
  height: 449.5px;
  overflow: hidden;
  border-right: 1px solid #ababab;
  border-bottom: 1px solid #ababab;
}
#sheet {
  width: 1256px;
  table-layout: fixed;
  border-collapse: separate;
  border-spacing: 0;
  background: #fff;
  font-family: Lato, sans-serif;
  font-size: 13px;
  letter-spacing: 0.1px;
  color: #000;
}
.c-num { width: 25px; }
.c-a { width: 105px; }
.c-b { width: 137px; }
.c-c { width: 106px; }
.c-d { width: 77px; }
.c-e { width: 60px; }
.c-f { width: 166px; }
.c-std { width: 60px; }
.c-p { width: 40px; }
#sheet th, #sheet td {
  height: 18.75px;
  padding: 1px 1px 0;
  line-height: 16px;
  overflow: hidden;
  border-right: 1px solid #d4d4d4;
  border-bottom: 1px solid #d4d4d4;
  text-align: left;
}
#sheet th {
  padding: 1px 0 0;
  background: #e6e6e6;
  font-size: 12.5px;
  font-weight: normal;
  letter-spacing: -0.2px;
  text-align: center;
  border-color: #ababab;
}
#sheet thead th {
  height: 18px;
  padding-right: 1px;
  border-right-color: #c0c0c0;
}
#sheet thead th:first-child {
  padding: 0 0 2px 9px;
}
#sheet thead th:last-child {
  padding-left: 21px;
}
#sheet tbody th {
  border-bottom-color: #cfcfcf;
}
#sheet td.num {
  font-size: 12.5px;
  letter-spacing: -0.3px;
  text-align: right;
  padding-right: 2px;
}
#sheet th.picked {
  background: #d2d2d2;
  color: #217346;
  border-right: 2px solid #217346;
}
#sheet thead th.picked {
  border-right: 1px solid #ababab;
  border-bottom: 2px solid #217346;
}
#sheet td.shaded {
  background: #c6c6c6;
  border-bottom-color: #b0b0b0;
}
.corner {
  display: block;
  width: 0;
  border-left: 12px solid transparent;
  border-bottom: 11px solid #b4b4b4;
}
.selection {
  position: absolute;
  left: 508px;
  top: 36px;
  width: 168px;
  height: 154px;
  border: 2px solid #217346;
}
.selection i {
  position: absolute;
  right: -3px;
  bottom: -3px;
  width: 6px;
  height: 6px;
  background: #217346;
  border: 1px solid #fff;
  border-width: 1px 0 0 1px;
}
.cursor {
  position: absolute;
  left: 602px;
  top: 133px;
}
.vscroll {
  display: flex;
  flex-direction: column;
  width: 15px;
  margin-left: 3px;
  padding-top: 1px;
}
.arrow {
  display: flex;
  align-items: center;
  justify-content: center;
  flex: none;
  width: 15px;
  height: 15px;
  background: #fdfdfd;
  border: 1px solid #b0b0b0;
}
.thumb {
  background: #fff;
  border: 1px solid #ababab;
}
.track {
  flex: 1;
  background: #d9d9d9;
}
.vscroll .thumb { height: 15px; }
.up, .down, .left, .right {
  border: 3px solid transparent;
}
.up { border-bottom: 4px solid #666; border-top: 0; }
.down { border-top: 4px solid #666; border-bottom: 0; }
.left { border-right: 4px solid #555; border-left: 0; }
.right { border-left: 4px solid #555; border-right: 0; }

/* sheet tabs */
.sheet-tabs {
  display: flex;
  height: 26.5px;
  border-bottom: 1px solid #c6c6c6;
  font-size: 12px;
  letter-spacing: -0.2px;
  color: #444;
}
.pager {
  display: flex;
  align-items: center;
  gap: 23px;
  width: 94px;
  padding-left: 25px;
}
.pager .left { border-right-color: #bbb; }
.pager .right { border-left-color: #bbb; }
.st {
  height: 20px;
  margin-top: 3px;
  line-height: 19px;
  text-align: center;
  border-left: 1px solid #ababab;
}
.zaposleni { width: 79px; padding-right: 2px; }
.turizam { width: 69px; }
.kozmetika {
  width: 83px;
  height: 23px;
  margin-top: 0;
  padding-right: 2px;
  line-height: 25px;
  background: #fff;
  border-bottom: 2px solid #217346;
  color: #217346;
  font-weight: bold;
  letter-spacing: -0.4px;
}
.matalurgija { width: 89px; border-left: 0; border-right: 1px solid #ababab; }
.objekti {
  width: 59px;
  margin-left: 2px;
  background: #00ffff;
  border-left: 0;
  color: #222;
}
.zemlje { width: 62px; margin-left: 2px; border-right: 1px solid #ababab; }
.add { margin: 5px 0 0 30px; }
.sheet-tabs .grip {
  width: 10px;
  margin-left: 176px;
}
.hscroll {
  display: flex;
  width: 475px;
  margin: 6px 0 0 10px;
}
.hscroll .thumb { width: 416px; height: 15px; }
.hscroll .track { height: 15px; }

/* status bar */
.status {
  display: flex;
  align-items: center;
  height: 21px;
  padding-bottom: 2px;
  background: #f0f0f0;
  font-size: 11px;
  color: #555;
  letter-spacing: -0.5px;
}
.ready { width: 748px; padding-left: 7px; letter-spacing: -0.2px; }
.avg { width: 99px; }
.count { width: 62px; }
.sum { width: 88px; }
.mode {
  display: flex;
  align-items: center;
  justify-content: center;
  width: 36px;
  height: 20px;
}
.mode.on { background: #cdcdcd; }
.zoom {
  display: flex;
  align-items: center;
  padding-left: 5px;
}
.minus {
  width: 6px;
  height: 2px;
  background: #555;
}
.slider {
  display: flex;
  justify-content: center;
  align-items: center;
  width: 94px;
  height: 1px;
  margin: 0 3px 0 4px;
  background: #aaa;
}
.slider i {
  width: 4px;
  height: 11px;
  background: #666;
}
.plus {
  width: 8px;
  height: 8px;
  margin-right: 15px;
  background: linear-gradient(#555, #555) center / 8px 2px no-repeat, linear-gradient(#555, #555) center / 2px 8px no-repeat;
}

/* taskbar */
.taskbar {
  display: flex;
  height: 37px;
  background: #1c312f;
  color: #fff;
}
.start {
  display: flex;
  align-items: center;
  justify-content: center;
  width: 45px;
}
.search {
  display: flex;
  align-items: center;
  gap: 10px;
  width: 323px;
  padding-left: 11px;
  background: #f3f3f3;
  color: #444;
  font-size: 14px;
  letter-spacing: -0.3px;
}
.app {
  position: relative;
  display: flex;
  align-items: center;
  justify-content: center;
  width: 46px;
}
.task-view {
  width: 47px;
  padding-right: 3px;
}
.app.open::after {
  content: "";
  position: absolute;
  left: 4px;
  right: 4px;
  bottom: 0;
  height: 3px;
  background: #76b0e4;
}
.app.current {
  background: #485a58;
}
.app.current::after {
  left: 0;
  right: 0;
}
.xl {
  display: flex;
  align-items: center;
}
.xl b {
  width: 11px;
  height: 18px;
  line-height: 18px;
  text-align: center;
  background: #18793f;
}
.tray {
  display: flex;
  align-items: center;
  margin-left: auto;
}
.mic { margin-left: 11px; }
.net { margin-left: 11px; }
.vol { margin-left: 7px; }
.lang { width: 25px; margin-left: 10px; }
.clock {
  display: flex;
  flex-direction: column;
  align-items: center;
  width: 62px;
  line-height: 16px;
  padding-bottom: 2px;
  letter-spacing: -0.5px;
}
.notes {
  position: relative;
  width: 15px;
  margin: 0 0 3px 9px;
}
.notes b {
  position: absolute;
  left: 6px;
  top: 7px;
  width: 16px;
  height: 16px;
  border: 1px solid #999;
  border-radius: 50%;
  background: #333d3c;
  font-size: 10px;
  line-height: 14px;
  text-align: center;
}
.desk {
  width: 1px;
  height: 37px;
  margin: 0 4px 0 19px;
  background: #7c8886;
}
```
FILE: script.js
```js
const letters = ['A', 'B', 'C', 'D', 'E', 'F', 'G', 'H', 'I', 'J', 'K', 'L', 'M', 'N', 'O', 'P'];

const rows = [
  ['Broj transakcije', 'Ime', 'Datum', 'Proizvod', 'Komada', 'Prihod', 'Region'],
  ['65', 'Ana', '10.4.2005', 'karmin', '6', '15,94 €', 'BiH'],
  ['182', 'Ana', '4.5.2004', 'karmin', '78', '236,14 €', 'BiH'],
  ['232', 'Ana', '6.6.2004', 'karmin', '63', '190,91 €', 'BiH'],
  ['388', 'Ana', '21.3.2004', 'karmin', '37', '112,93 €', 'BiH'],
  ['788', 'Ana', '12.10.2006', 'karmin', '9', '24,83 €', 'BiH'],
  ['906', 'Ana', '30.3.2005', 'karmin', '79', '239,34 €', 'BiH'],
  ['1315', 'Ana', '22.8.2004', 'karmin', '12', '37,82 €', 'BiH'],
  ['1586', 'Ana', '24.9.2004', 'karmin', '66', '199,70 €', 'BiH'],
  ['1727', 'Ana', '3.11.2006', 'karmin', '39', '118,67 €', 'BiH'],
  ['1851', 'Ana', '23.4.2004', 'karmin', '37', '113,27 €', 'BiH'],
  ['107', 'Emilija', '21.3.2004', 'karmin', '9', '29,28 €', 'BiH'],
  ['572', 'Emilija', '6.12.2006', 'karmin', '40', '121,87 €', 'BiH'],
  ['796', 'Emilija', '6.3.2006', 'karmin', '3', '10,42 €', 'BiH'],
  ['808', 'Emilija', '17.2.2004', 'karmin', '15', '47,20 €', 'BiH'],
  ['979', 'Emilija', '12.2.2006', 'karmin', '2', '8,31 €', 'BiH'],
  ['1135', 'Emilija', '21.1.2006', 'karmin', '4', '9,97 €', 'BiH'],
  ['1802', 'Emilija', '10.3.2004', 'karmin', '82', '247,02 €', 'BiH'],
  ['8', 'Jelena', '17.12.2006', 'karmin', '72', '217,84 €', 'BiH'],
  ['44', 'Jelena', '6.6.2004', 'karmin', '55', '167,12 €', 'BiH'],
  ['389', 'Jelena', '10.4.2005', 'karmin', '12', '38,62 €', 'BiH'],
  ['467', 'Jelena', '7.8.2006', 'karmin', '36', '109,68 €', 'BiH'],
  ['709', 'Jelena', '23.4.2004', 'karmin', '36', '109,80 €', 'BiH']
];

const numeric = [0, 2, 4, 5];

let head = '<tr><th><i class="corner"></i></th>';
letters.forEach(l => {
  head += `<th class="${l === 'F' ? 'picked' : ''}">${l}</th>`;
});
document.querySelector('#sheet thead').innerHTML = head + '</tr>';

let body = '';
rows.forEach((row, r) => {
  const picked = r >= 1 && r <= 8;
  body += `<tr><th class="${picked ? 'picked' : ''}">${r + 1}</th>`;
  letters.forEach((l, c) => {
    let cls = r > 0 && numeric.includes(c) ? 'num' : '';
    if (c === 5 && r >= 2 && r <= 8) cls += ' shaded';
    body += `<td class="${cls}">${row[c] || ''}</td>`;
  });
  body += '</tr>';
});
document.querySelector('#sheet tbody').innerHTML = body;
```
